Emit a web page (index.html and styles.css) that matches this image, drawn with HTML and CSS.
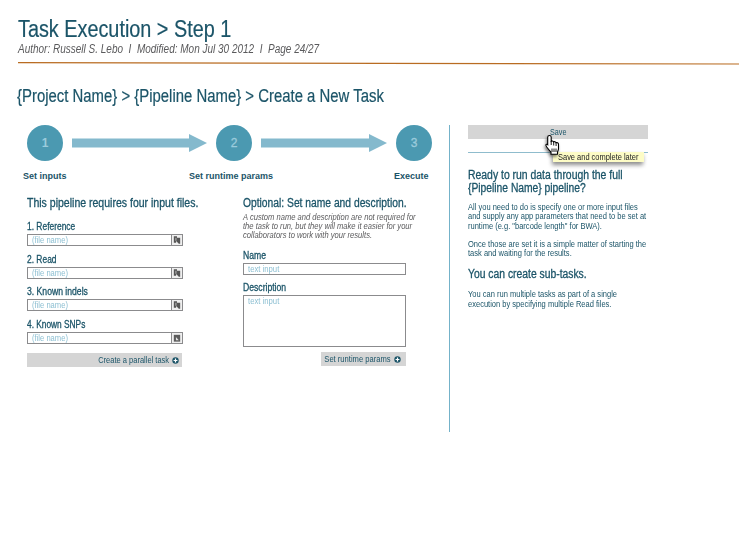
FILE: index.html
```
<!DOCTYPE html>
<html lang="en">
<head>
<meta charset="utf-8">
<title>Task Execution</title>
<link rel="stylesheet" href="styles.css">
</head>
<body>
<svg class="defs" width="0" height="0">
  <symbol id="file" viewBox="0 0 11 10">
    <path d="M2 1h3.500v1.500H9V9H7.500L4.500 6v2H2z" fill="#555"/>
    <path d="M4.300 2.500v3.300" stroke="#e4e4e4" stroke-width=".8"/>
  </symbol>
  <symbol id="folder" viewBox="0 0 11 10">
    <path d="M2 1.500h7V9H2z" fill="#5c5c5c"/>
    <path d="M4.300 4v3.500h3.200z" fill="#e4e4e4"/>
  </symbol>
  <symbol id="plus" viewBox="0 0 7 7">
    <circle cx="3.500" cy="3.500" r="3.200" fill="#1b5468"/>
    <path d="M3.500 1.600v3.800M1.600 3.500h3.800" stroke="#fff" stroke-width="1.200"/>
  </symbol>
</svg>
<header class="page-header">
  <h1 class="title"><span class="t k862">Task Execution &gt; Step 1</span></h1>
  <div class="meta"><span class="t k833">Author: Russell S. Lebo&nbsp; I&nbsp; Modified: Mon Jul 30 2012&nbsp; I&nbsp; Page 24/27</span></div>
  <svg class="rule" width="721" height="3" viewBox="0 0 721 3"><path d="M0 .6L721 2" stroke="#b96c22" stroke-width="1.200"/></svg>
  <h2 class="crumb"><span class="t k851">{Project Name} &gt; {Pipeline Name} &gt; Create a New Task</span></h2>
</header>
<div class="content">
  <main>
    <div class="stepper">
      <div class="dot first">1</div>
      <svg width="135" height="36"><path d="M0 13.500h117V9l18 9-18 9v-4.500H0z" fill="#84b9cd"/></svg>
      <div class="dot">2</div>
      <svg width="126" height="36"><path d="M0 13.500h108V9l18 9-18 9v-4.500H0z" fill="#84b9cd"/></svg>
      <div class="dot">3</div>
    </div>
    <div class="step-labels"><span>Set inputs</span><span>Set runtime params</span><span>Execute</span></div>
    <div class="columns">
      <section class="inputs">
        <h3><span class="t k877">This pipeline requires four input files.</span></h3>
        <div class="field"><label><span class="t k843">1. Reference</span></label><div class="file"><span class="t k846">(file name)</span><svg><use href="#file"/></svg></div></div>
        <div class="field"><label><span class="t k843">2. Read</span></label><div class="file"><span class="t k846">(file name)</span><svg><use href="#file"/></svg></div></div>
        <div class="field tight"><label><span class="t k862">3. Known indels</span></label><div class="file"><span class="t k846">(file name)</span><svg><use href="#file"/></svg></div></div>
        <div class="field"><label><span class="t k833">4. Known SNPs</span></label><div class="file"><span class="t k846">(file name)</span><svg><use href="#folder"/></svg></div></div>
        <div class="button parallel"><span class="t k833 right">Create a parallel task</span><svg><use href="#plus"/></svg></div>
      </section>
      <section class="details">
        <h3><span class="t k857">Optional: Set name and description.</span></h3>
        <p class="note"><span class="t k843">A custom name and description are not required for<br>the task to run, but they will make it easier for your<br>collaborators to work with your results.</span></p>
        <div class="field"><label><span class="t k862">Name</span></label><div class="box"><span class="t k857">text input</span></div></div>
        <div class="field tight"><label><span class="t k862">Description</span></label><div class="box area"><span class="t k857">text input</span></div></div>
        <div class="button params"><span class="t k843 right">Set runtime params</span><svg><use href="#plus"/></svg></div>
      </section>
    </div>
  </main>
  <aside>
    <div class="save-group">
      <div class="button save"><span class="t k8">Save</span></div>
      <svg class="hand" width="20" height="24" viewBox="0 0 20 24"><path d="M4.500 1.500c1.100 0 1.700.7 1.700 1.700v4c.5-.4 1.900-.4 2.400.7.7-.5 2-.3 2.400.8.900-.4 2.500.1 2.500 1.600v4.500c0 1.400-.9 2.200-1 3.400v2H6v-2C5.300 17 1 13 .9 11.200c-.1-1 1-1.300 1.800-.5V3.200c0-1 .7-1.700 1.800-1.700z" fill="#fff" stroke="#000" stroke-width="1.100"/><path d="M6.200 7v4M8.700 8v3.500M11.100 9v3M7 14.500v3.500M9 14.500v3.500M11 14.500v3.500" stroke="#000" stroke-width=".9"/></svg>
      <div class="tip"><span class="t k829">Save and complete later</span></div>
    </div>
    <h3><span class="t k868">Ready to run data through the full</span><br><span class="t k857">{Pipeline Name} pipeline?</span></h3>
    <p><span class="t k836">All you need to do is specify one or more input files<br>and supply any app parameters that need to be set at<br>runtime (e.g. "barcode length" for BWA).</span></p>
    <p><span class="t k836">Once those are set it is a simple matter of starting the<br>task and waiting for the results.</span></p>
    <h3 class="sub"><span class="t k862">You can create sub-tasks.</span></h3>
    <p><span class="t k836">You can run multiple tasks as part of a single<br>execution by specifying multiple Read files.</span></p>
  </aside>
</div>
</body>
</html>
```
FILE: styles.css
```
* { box-sizing: border-box; }
body {
  margin: 0;
  background: #fff;
  color: #1b5468;
  font: 9px/10px "Liberation Sans", Arial, sans-serif;
}
h1, h2, h3, p { margin: 0; font-weight: normal; }
svg { display: block; flex: none; }
.defs { position: absolute; }

/* condensed lettering */
.t { display: inline-block; vertical-align: top; white-space: nowrap; transform-origin: 0 0; }
.right { transform-origin: 100% 0; }
.k8 { transform: scaleX(.8); }
.k829 { transform: scaleX(.829); }
.k833 { transform: scaleX(.833); }
.k836 { transform: scaleX(.836); }
.k843 { transform: scaleX(.843); }
.k846 { transform: scaleX(.846); }
.k851 { transform: scaleX(.852); }
.k857 { transform: scaleX(.857); }
.k862 { transform: scaleX(.862); }
.k868 { transform: scaleX(.868); }
.k877 { transform: scaleX(.877); }

.page-header { padding: 16px 17px 0 18px; }
.title { font-size: 23px; line-height: 26px; -webkit-text-stroke: .2px #1b5468; }
.meta { font-size: 12px; line-height: 14px; font-style: italic; color: #5a5a5c; }
.rule { margin-top: 6px; }
.crumb { margin: 21px 0 0 -1px; font-size: 17.500px; line-height: 20px; -webkit-text-stroke: .2px #1b5468; }

.content { display: flex; padding: 19px 0 0 27px; }
main { width: 422px; height: 307px; }

.stepper { display: flex; gap: 9px; }
.dot {
  width: 36px;
  height: 36px;
  border-radius: 50%;
  background: #4b99b1;
  color: #9bcbdc;
  font-size: 12px;
  line-height: 36px;
  text-align: center;
  -webkit-text-stroke: .3px #9bcbdc;
}
.dot.first { font-weight: bold; -webkit-text-stroke: 0; }
.step-labels {
  display: grid;
  grid-template-columns: 166px 205px auto;
  margin: 10px 0 0 -4px;
  font-weight: bold;
}
.columns { display: grid; grid-template-columns: 216px 172px; margin-top: 15px; }
h3 { font-size: 12px; line-height: 14px; -webkit-text-stroke: .3px #1b5468; }

.field { margin-top: 8px; }
.field.tight { margin-top: 7px; }
label { display: block; margin-bottom: 2px; height: 11px; font-size: 10px; line-height: 11px; -webkit-text-stroke: .3px #1b5468; }
.inputs .field:nth-of-type(1) { margin-top: 11px; }
.file, .box { border: 1px solid #8b8b8d; color: #8cbfd2; padding-left: 4px; height: 12px; }
.file { display: flex; justify-content: space-between; width: 156px; }
.file svg { width: 11px; height: 10px; border-left: 1px solid #8b8b8d; background: #efefef; }
.box { width: 163px; }
.box.area { height: 52px; }

.button { display: flex; align-items: center; justify-content: flex-end; gap: 3px; height: 14px; background: #d5d5d5; }
.button svg { width: 7px; height: 7px; }
.parallel { width: 155px; height: 14px; margin-top: 9px; padding-right: 3px; }
.params { width: 85px; margin: 5px 0 0 78px; padding-right: 5px; }

.note { margin: 3px 0 10px; line-height: 9px; font-style: italic; color: #5a5a5c; }
.note + .field { margin-top: 0; }

aside { width: 199px; padding-left: 18px; border-left: 1px solid #74b2c9; }
.save-group { position: relative; height: 28px; margin-bottom: 16px; border-bottom: 1px solid #8fbccd; }
.save { width: 180px; justify-content: flex-start; padding-left: 82px; }
.hand { position: absolute; left: 77px; top: 9px; z-index: 1; filter: drop-shadow(-1px 2px 1.500px rgba(0, 0, 0, .5)); }
.tip {
  position: absolute;
  left: 85px;
  top: 27px;
  width: 91px;
  height: 10px;
  padding-left: 5px;
  background: #fdfcc6;
  color: #222;
  box-shadow: -1px 3px 4px rgba(0, 0, 0, .45);
}
aside h3 { line-height: 13px; }
aside p { margin-top: 8px; line-height: 9.300px; }
aside p + p { margin-top: 9px; }
aside .sub { margin-top: 10px; }
aside .sub + p { margin-top: 9px; }
```
